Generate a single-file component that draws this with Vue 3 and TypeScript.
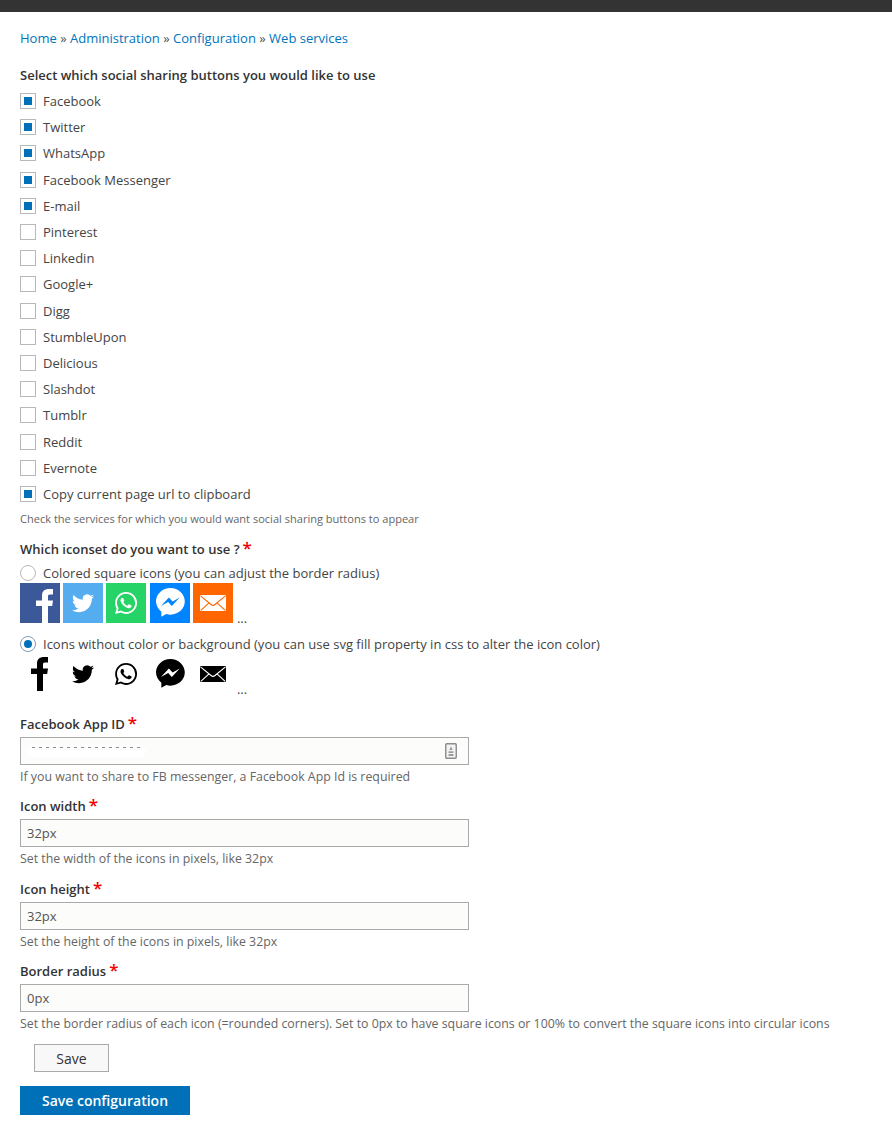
<template>
  <div class="topbar"></div>
  <main class="page">
    <nav class="crumbs">
      <template v-for="(c, i) in crumbs" :key="c">
        <span v-if="i" class="sep"> » </span><a href="#" @click.prevent>{{ c }}</a>
      </template>
    </nav>

    <h4 class="label first">Select which social sharing buttons you would like to use</h4>
    <div class="checks">
      <label v-for="s in services" :key="s.name" class="check">
        <input v-model="s.on" type="checkbox" />
        <span>{{ s.name }}</span>
      </label>
    </div>
    <p class="hint small">Check the services for which you would want social sharing buttons to appear</p>

    <h4 class="label iconset">Which iconset do you want to use ?<em>*</em></h4>
    <label class="check radio-row">
      <input v-model="iconset" type="radio" value="square" />
      <span>Colored square icons (you can adjust the border radius)</span>
    </label>
    <div class="icons colored">
      <svg v-for="ic in icons" :key="ic.name" viewBox="0 0 40 40" :style="{ background: ic.bg, color: '#fff', '--cut': ic.bg }">
        <use :href="'#' + ic.name" />
      </svg>
      <span class="dots">...</span>
    </div>
    <label class="check radio-row second">
      <input v-model="iconset" type="radio" value="plain" />
      <span>Icons without color or background (you can use svg fill property in css to alter the icon color)</span>
    </label>
    <div class="icons plain">
      <svg viewBox="0 0 40 40" class="plain-f"><use href="#facebook" /></svg>
      <svg v-for="ic in icons.slice(1)" :key="ic.name" viewBox="0 0 40 40" style="--cut: #fff"><use :href="'#' + ic.name" /></svg>
      <span class="dots">...</span>
    </div>

    <div v-for="f in fields" :key="f.label" class="field">
      <label class="label">{{ f.label }}<em>*</em></label>
      <div class="input-wrap">
        <input type="text" :value="f.value" />
        <template v-if="f.secret">
          <span class="smudge"></span>
          <svg class="keyicon" viewBox="0 0 12 16">
            <rect x=".75" y=".75" width="10.5" height="14.5" rx="1" fill="#f4f4f4" stroke="#8c8c8c" stroke-width="1.4" />
            <path d="M6 3.2 7.6 7H4.4zM3.6 8.2h4.8V10H3.6zM3.6 11h4.8v2H3.6z" fill="#9a9a9a" />
          </svg>
        </template>
      </div>
      <p class="hint">{{ f.hint }}</p>
    </div>

    <button class="btn save" type="button">Save</button>
    <button class="btn primary" type="button">Save configuration</button>
  </main>

  <svg width="0" height="0" class="defs">
    <defs>
      <path id="facebook" fill="currentColor" d="M22 40V23h-6v-5.500h6v-5C22 8 25 6 29 6h4v5.500h-3c-1.700 0-2 .800-2 2.200v3.800h5l-.8 5.500H28v17z" />
      <g id="twitter" transform="translate(9 9.200) scale(.92)">
        <path fill="currentColor" d="M23.953 4.57a10 10 0 01-2.825.775 4.958 4.958 0 002.163-2.723c-.951.555-2.005.959-3.127 1.184a4.92 4.92 0 00-8.384 4.482C7.69 8.095 4.067 6.13 1.64 3.162a4.822 4.822 0 00-.666 2.475c0 1.71.87 3.213 2.188 4.096a4.904 4.904 0 01-2.228-.616v.06a4.923 4.923 0 003.946 4.827 4.996 4.996 0 01-2.212.085 4.936 4.936 0 004.604 3.417 9.867 9.867 0 01-6.102 2.105c-.39 0-.779-.023-1.17-.067a13.995 13.995 0 007.557 2.209c9.053 0 13.998-7.496 13.998-13.985 0-.21 0-.42-.015-.63A9.935 9.935 0 0024 4.59z" />
      </g>
      <g id="whatsapp" transform="translate(9 9) scale(.92)">
        <path fill="currentColor" d="M17.472 14.382c-.297-.149-1.758-.867-2.03-.967-.273-.099-.471-.148-.67.15-.197.297-.767.966-.94 1.164-.173.199-.347.223-.644.075-.297-.15-1.255-.463-2.39-1.475-.883-.788-1.48-1.761-1.653-2.059-.173-.297-.018-.458.13-.606.134-.133.298-.347.446-.52.149-.174.198-.298.298-.497.099-.198.05-.371-.025-.52-.075-.149-.669-1.612-.916-2.207-.242-.579-.487-.5-.669-.51-.173-.008-.371-.01-.57-.01-.198 0-.52.074-.792.372-.272.297-1.04 1.016-1.04 2.479 0 1.462 1.065 2.875 1.213 3.074.149.198 2.096 3.2 5.077 4.487.709.306 1.262.489 1.694.625.712.227 1.36.195 1.871.118.571-.085 1.758-.719 2.006-1.413.248-.694.248-1.289.173-1.413-.074-.124-.272-.198-.57-.347m-5.421 7.403h-.004a9.87 9.87 0 01-5.031-1.378l-.361-.214-3.741.982.998-3.648-.235-.374a9.86 9.86 0 01-1.51-5.26c.001-5.45 4.436-9.884 9.888-9.884 2.64 0 5.122 1.03 6.988 2.898a9.825 9.825 0 012.893 6.994c-.003 5.45-4.437 9.884-9.885 9.884m8.413-18.297A11.815 11.815 0 0012.05 0C5.495 0 .16 5.335.157 11.892c0 2.096.547 4.142 1.588 5.945L.057 24l6.305-1.654a11.882 11.882 0 005.683 1.448h.005c6.554 0 11.89-5.335 11.893-11.893a11.821 11.821 0 00-3.48-8.413z" />
      </g>
      <g id="messenger" transform="translate(6 5) scale(1.2)">
        <path fill="currentColor" fill-rule="evenodd" d="M12 0C5.373 0 0 4.974 0 11.111c0 3.498 1.744 6.614 4.469 8.652V24l4.088-2.242c1.092.3 2.246.464 3.443.464 6.627 0 12-4.975 12-11.111S18.627 0 12 0zm1.191 14.963l-3.055-3.26-5.963 3.26L10.732 8l3.131 3.259L19.752 8l-6.561 6.963z" />
      </g>
      <g id="mail">
        <rect x="7" y="12" width="26" height="16" rx=".8" fill="currentColor" />
        <path d="M7.500 12.800 18 21.500c1.200 1 2.800 1 4 0l10.500-8.700M7.800 27.300l8.200-7.400M32.200 27.300 24 19.900" fill="none" style="stroke: var(--cut)" stroke-width="1.100" />
      </g>
    </defs>
  </svg>
</template>

<script setup lang="ts">
import { reactive, ref } from 'vue'

interface Service {
  name: string
  on: boolean
}

const crumbs = ['Home', 'Administration', 'Configuration', 'Web services']

const enabled = ['Facebook', 'Twitter', 'WhatsApp', 'Facebook Messenger', 'E-mail', 'Copy current page url to clipboard']
const services = reactive<Service[]>(
  [
    'Facebook', 'Twitter', 'WhatsApp', 'Facebook Messenger', 'E-mail', 'Pinterest', 'Linkedin', 'Google+',
    'Digg', 'StumbleUpon', 'Delicious', 'Slashdot', 'Tumblr', 'Reddit', 'Evernote',
    'Copy current page url to clipboard',
  ].map((name) => ({ name, on: enabled.includes(name) })),
)

const iconset = ref('plain')

const icons = [
  { name: 'facebook', bg: '#3b5998' },
  { name: 'twitter', bg: '#55acee' },
  { name: 'whatsapp', bg: '#25d366' },
  { name: 'messenger', bg: '#0084ff' },
  { name: 'mail', bg: '#ff6600' },
]

const fields = [
  { label: 'Facebook App ID', value: '', hint: 'If you want to share to FB messenger, a Facebook App Id is required', secret: true },
  { label: 'Icon width', value: '32px', hint: 'Set the width of the icons in pixels, like 32px' },
  { label: 'Icon height', value: '32px', hint: 'Set the height of the icons in pixels, like 32px' },
  {
    label: 'Border radius',
    value: '0px',
    hint: 'Set the border radius of each icon (=rounded corners). Set to 0px to have square icons or 100% to convert the square icons into circular icons',
  },
]
</script>

<style>
html,
body {
  background: #fff;
}
</style>

<style scoped>
.topbar {
  height: 12px;
  background: #333;
}

.page {
  padding: 0 20px;
  font-family: 'Open Sans', 'Noto Sans', sans-serif;
  font-size: 13px;
  line-height: 18px;
  color: #444;
}

.crumbs {
  padding-top: 17px;
  height: 18px;
}

.crumbs a {
  color: #0074bd;
  text-decoration: none;
}

.sep {
  color: #555;
}

.label {
  display: block;
  margin: 0;
  font-size: 13px;
  font-weight: 600;
  color: #333;
}

.label em {
  margin-left: 3px;
  font-style: normal;
  font-size: 17px;
  line-height: 10px;
  color: #e00;
}

.label.first {
  margin-top: 19px;
}

.checks {
  display: flex;
  flex-direction: column;
  margin-top: 4px;
}

.check {
  display: flex;
  align-items: center;
  gap: 7px;
  height: 26.2px;
}

.check input {
  appearance: none;
  flex: none;
  width: 16px;
  height: 16px;
  margin: 0;
  border: 1px solid #b8b8b8;
  background: #fff;
}

.check input[type='checkbox']:checked {
  background: #0071b8;
  background-clip: content-box;
  padding: 3px;
}

.check input[type='radio'] {
  border-radius: 50%;
}

.check input[type='radio']:checked {
  border-color: #7f9db9;
  background: #0071b8;
  background-clip: content-box;
  padding: 3px;
}

.hint {
  margin: 4px 0 0;
  font-size: 12.35px;
  line-height: 16px;
  color: #666;
}

.hint.small {
  margin-top: 4px;
  font-size: 11.05px;
}

.label.iconset {
  margin-top: 13px;
}

.radio-row {
  height: 18px;
  margin-top: 6px;
}

.radio-row.second {
  margin-top: 12px;
}

.icons {
  display: flex;
  align-items: flex-end;
  gap: 3.2px;
  margin-top: 1px;
}

.icons svg {
  flex: none;
  width: 40px;
  height: 40px;
}

.icons .dots {
  margin-left: 1px;
  font-size: 13px;
  line-height: 9px;
}

.plain {
  margin-top: 1px;
  color: #000;
}

.plain .dots {
  color: #444;
}

.plain-f {
  transform: translate(-5px, -3px);
}

.field {
  margin-top: 12.33px;
}

.plain + .field {
  margin-top: 21px;
}

.field .label {
  line-height: 18px;
}

.input-wrap {
  position: relative;
  width: 449px;
  margin-top: 4px;
}

.input-wrap input {
  display: block;
  box-sizing: border-box;
  width: 100%;
  height: 28px;
  padding: 0 6px;
  border: 1px solid #aaa;
  border-radius: 0;
  background: #fcfcfa;
  font: inherit;
  color: #555;
  outline: none;
}

.smudge {
  position: absolute;
  left: 6px;
  top: 9px;
  width: 120px;
  height: 11px;
  border-radius: 5px;
  background:
    repeating-linear-gradient(90deg, #8a8a8a 0 3px, transparent 3px 7px) 6px 1px / 108px 1px no-repeat,
    #fff;
}

.keyicon {
  position: absolute;
  right: 12px;
  top: 6px;
  width: 12px;
  height: 16px;
}

.btn {
  display: block;
  font-family: inherit;
  cursor: pointer;
}

.save {
  box-sizing: border-box;
  width: 75px;
  height: 28px;
  margin: 12px 0 0 14px;
  padding: 1px 0 0;
  border: 1px solid #aaa;
  background: #f8f8f8;
  font-size: 14px;
  color: #333;
}

.primary {
  width: 170px;
  height: 29px;
  margin-top: 14px;
  border: 0;
  background: #0071b8;
  font-size: 14px;
  font-weight: 600;
  color: #fff;
}

.defs {
  position: absolute;
}
</style>
